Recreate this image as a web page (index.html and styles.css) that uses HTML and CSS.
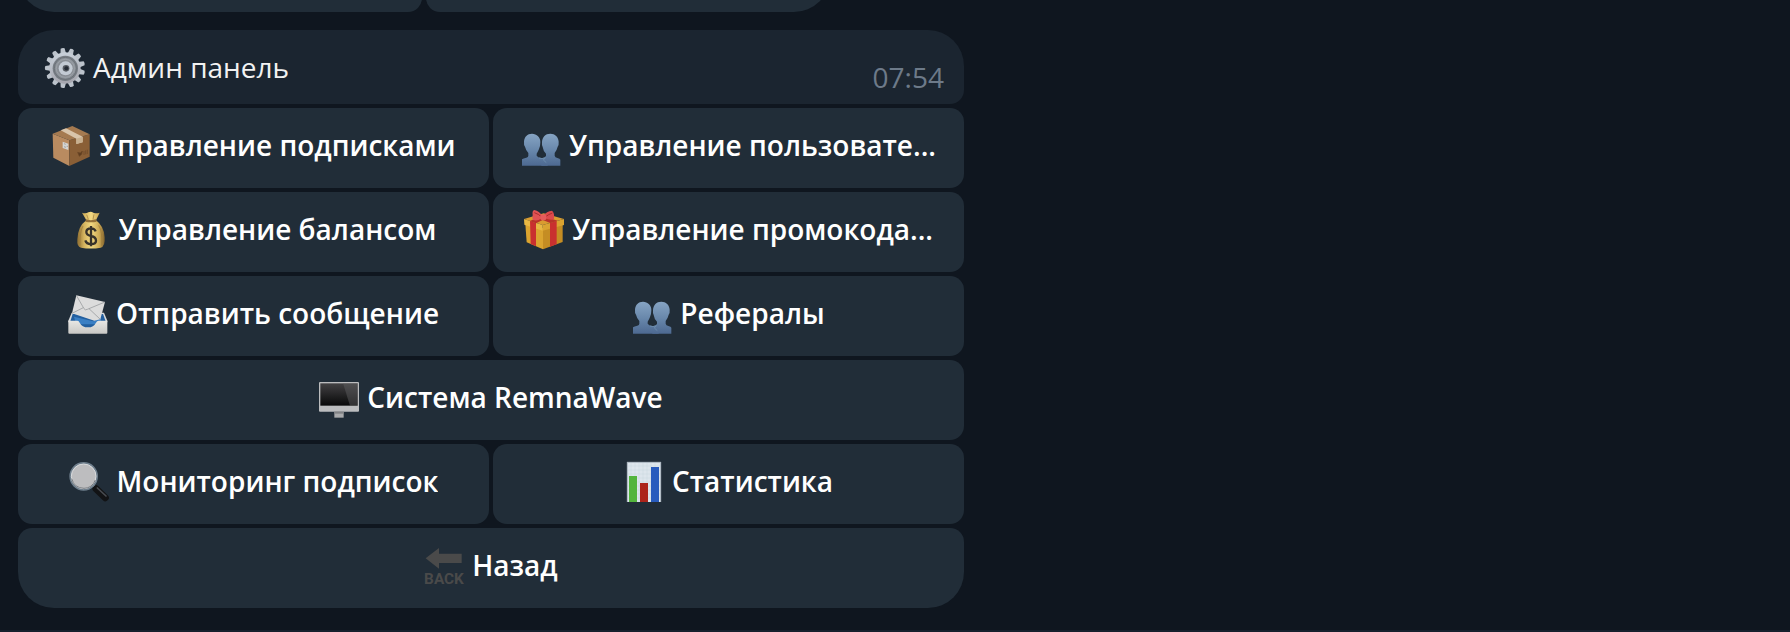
FILE: index.html
```html
<!DOCTYPE html>
<html lang="ru">
<head>
<meta charset="utf-8">
<meta name="viewport" content="width=device-width, initial-scale=1">
<title>Админ панель</title>
<link rel="stylesheet" href="styles.css">
</head>
<body>
<main class="chat">
  <section class="message message-previous" aria-label="Предыдущее сообщение">
    <div class="keyboard">
      <button class="key" type="button" aria-label="Кнопка 1"></button>
      <button class="key" type="button" aria-label="Кнопка 2"></button>
    </div>
  </section>

  <section class="message">
    <header class="bubble">
      <svg class="icon" viewBox="42 38 120 120" aria-hidden="true">
        <defs>
          <linearGradient id="steel" x1="0" y1="0" x2="0" y2="1"><stop offset="0" stop-color="#c9d1da"/><stop offset="1" stop-color="#a5a5ad"/></linearGradient>
        </defs>
        <g fill="url(#steel)" transform="translate(102 98) rotate(-7)">
          <g id="teeth">
            <path id="tooth" d="M-9-40 L-6-59 Q0-62 6-59 L9-40Z" fill="#bcc3cb"/>
            <use href="#tooth" transform="rotate(27.7)"/><use href="#tooth" transform="rotate(55.4)"/><use href="#tooth" transform="rotate(83.1)"/><use href="#tooth" transform="rotate(110.8)"/><use href="#tooth" transform="rotate(138.5)"/><use href="#tooth" transform="rotate(166.2)"/><use href="#tooth" transform="rotate(193.8)"/><use href="#tooth" transform="rotate(221.5)"/><use href="#tooth" transform="rotate(249.2)"/><use href="#tooth" transform="rotate(276.9)"/><use href="#tooth" transform="rotate(304.6)"/><use href="#tooth" transform="rotate(332.3)"/>
          </g>
          <circle r="47"/>
        </g>
        <circle cx="103" cy="99" r="38" fill="#777d84"/>
        <circle cx="103" cy="99" r="33" fill="#8b9198" stroke="#62676d" stroke-width="2"/>
        <circle cx="103" cy="99" r="27" fill="#898e95" stroke="#a6abb1" stroke-width="2"/>
        <circle cx="104" cy="99" r="21" fill="#c3cad3"/>
        <circle cx="105" cy="99" r="10" fill="#555a61"/>
        <circle cx="106" cy="99" r="6" fill="#252b34"/>
      </svg>
      <h1 class="title">Админ панель</h1>
      <time class="time" datetime="07:54">07:54</time>
    </header>

    <div class="keyboard">
      <button class="key" type="button">
        <svg class="icon" viewBox="37 33 120 120" aria-hidden="true">
          <path d="M42 56 92 76V153L44 128Z" fill="#b98b60"/>
          <path d="M92 76 153 58V125L92 153Z" fill="#8a5f36"/>
          <path d="M42 56 101 33 153 58 92 76Z" fill="#a57a50"/>
          <path d="M66 46 82 40 132 65V82L113 87V71Z" fill="#d9c5ab"/>
          <path d="M113 71 132 65V82L113 87Z" fill="#c8b08f"/>
          <path d="M72 80 89 86V105L72 99Z" fill="#d4d5d3"/>
          <path d="M76 86 81 88M84 94H88M76 95 82 97" stroke="#888" stroke-width="2"/>
          <path d="M117 112 125 114 131 108 129 118 122 124ZM136 108V120M141 106V118M146 104V117" fill="#5f3d20" stroke="#6b4726" stroke-width="2"/>
        </svg>
        <span class="label">Управление подписками</span>
      </button>
      <button class="key" type="button">
        <svg class="icon" viewBox="30 33 120 120" aria-hidden="true">
          <defs>
            <linearGradient id="shade" x1="0" y1="55" x2="0" y2="152" gradientUnits="userSpaceOnUse"><stop offset="0" stop-color="#87a5c4"/><stop offset=".55" stop-color="#6786aa"/><stop offset="1" stop-color="#4d6991"/></linearGradient>
          </defs>
          <g id="people" fill="url(#shade)">
            <path d="M63 56C77 56 89 67 88 82Q88 94 84 102Q81 110 77 116V122Q80 127 91 129L110 134V152H33V133Q37 130 46 128Q52 126 52 122V114Q45 107 42 95Q38 91 39 80C40 65 49 56 63 56Z"/>
            <path d="M118 56C132 56 142 65 143 80Q144 91 140 95Q137 107 131 114V122Q132 127 139 129Q147 131 148 134V152H91V130Q102 128 105 123V116Q97 109 95 96Q92 92 93 81C94 66 103 56 118 56Z"/>
            <path d="M84 129Q93 133 103 128Q99 133 97 135L106 143" fill="none" stroke="#7697b5" stroke-width="2"/>
          </g>
        </svg>
        <span class="label">Управление пользовате...</span>
      </button>

      <button class="key" type="button">
        <svg class="icon" viewBox="30 30 120 120" aria-hidden="true">
          <defs>
            <linearGradient id="sack"><stop offset="0" stop-color="#8d6d31"/><stop offset=".25" stop-color="#d5b45f"/><stop offset=".5" stop-color="#f3d982"/><stop offset=".8" stop-color="#cda955"/><stop offset="1" stop-color="#80612b"/></linearGradient>
          </defs>
          <path d="M63 38Q74 42 82 37Q90 33 97 38Q106 42 116 38L105 61Q129 78 131 112Q133 140 119 143Q90 148 60 143Q47 141 49 118Q51 78 76 61Z" fill="url(#sack)"/>
          <path d="M75 58Q89 63 105 58L107 65Q90 69 73 65Z" fill="#947039"/>
          <path d="M77 44 82 58M99 43 96 58M66 78Q56 94 57 137M113 76Q125 94 122 137" fill="none" stroke="#9b7839" stroke-width="2"/>
          <path d="M104 94Q101 85 90 85Q76 85 76 96Q76 105 90 108Q105 111 105 122Q105 132 90 132Q76 132 73 121M90 78V139" fill="none" stroke="#38322a" stroke-width="7"/>
        </svg>
        <span class="label">Управление балансом</span>
      </button>
      <button class="key" type="button">
        <svg class="icon" viewBox="42 30 120 120" aria-hidden="true">
          <path d="M46 72 99 84V148L50 127Z" fill="#dba42f"/>
          <path d="M99 84 158 72V126L99 148Z" fill="#c58d23"/>
          <path d="M42 57 101 40 162 57 98 75Z" fill="#d99c30"/>
          <path d="M42 57 98 75V92L43 74Z" fill="#e8b743"/>
          <path d="M98 75 162 57V75L98 92Z" fill="#daa331"/>
          <path d="M60 63 78 69V139L62 132ZM120 69 140 63V133L120 140Z" fill="#c9302f"/>
          <path d="M59 63 97 48 143 62 121 69 98 60 78 70Z" fill="#b83229"/>
          <path d="M97 47Q88 34 73 30Q66 32 68 45Q66 54 69 60Q82 65 97 53Z" fill="#e05253"/>
          <path d="M101 46Q109 34 126 32Q134 37 132 58Q121 62 104 54Z" fill="#dc494b"/>
          <path d="M73 38Q86 42 95 51M127 39Q115 43 106 51" fill="none" stroke="#a92c30" stroke-width="3"/>
          <rect x="91" y="43" width="18" height="18" rx="6" fill="#e65b5b"/>
        </svg>
        <span class="label">Управление промокода...</span>
      </button>

      <button class="key" type="button">
        <svg class="icon" viewBox="54 33 120 120" aria-hidden="true">
          <defs>
            <linearGradient id="tray" x1="0" y1="0" x2="0" y2="1"><stop offset="0" stop-color="#e8e7e4"/><stop offset="1" stop-color="#c9c8c5"/></linearGradient>
          </defs>
          <path d="M65 89H162L172 113V118H55V113Z" fill="#d9dbdd"/>
          <path d="M68 93H159L167 115Q150 132 112 136Q81 134 61 115Z" fill="#235f9f"/>
          <path d="M72 101 130 115 153 105V124H78Z" fill="#3a7fc4"/>
          <path d="M79 37 165 57 151 109 133 113 66 91Z" fill="#dcdcdc"/>
          <path d="M79 37 102 77Q105 83 112 79L165 57M66 91 100 74M151 109 117 77" fill="none" stroke="#8d8f92" stroke-width="2"/>
          <path d="M55 113H82Q87 113 89 119Q96 133 114 133Q131 133 138 119Q141 113 146 113H172V149Q172 152 169 152H58Q55 152 55 149Z" fill="url(#tray)"/>
        </svg>
        <span class="label">Отправить сообщение</span>
      </button>
      <button class="key" type="button">
        <svg class="icon" viewBox="30 33 120 120" aria-hidden="true"><use href="#people"/></svg>
        <span class="label">Рефералы</span>
      </button>

      <button class="key key-wide" type="button">
        <svg class="icon" viewBox="60 30 120 120" aria-hidden="true">
          <defs>
            <linearGradient id="screen" x1="0" y1="0" x2="0" y2="1"><stop offset="0" stop-color="#424143"/><stop offset="1" stop-color="#080809"/></linearGradient>
          </defs>
          <rect x="60" y="42" width="120" height="89" rx="3" fill="#bbbcbe"/>
          <rect x="64" y="46" width="112" height="67" fill="url(#screen)"/>
          <path d="M132 46H176V113H153Z" fill="#626164" opacity=".45"/>
          <path d="M106 131H134V149H106Z" fill="#a9aaac"/>
          <path d="M106 131H134V137H106Z" fill="#808184"/>
        </svg>
        <span class="label">Система RemnaWave</span>
      </button>

      <button class="key" type="button">
        <svg class="icon" viewBox="53 36 120 120" aria-hidden="true">
          <path d="M124 104 136 115" stroke="#a0a5aa" stroke-width="8"/>
          <path d="M134 116 162 143" stroke="#121315" stroke-width="21" stroke-linecap="round"/>
          <path d="M138 114 164 138" stroke="#484b50" stroke-width="5" stroke-linecap="round"/>
          <circle cx="97" cy="79" r="40" fill="#bdbdc0" stroke="#6f7f8d" stroke-width="6"/>
          <circle cx="97" cy="79" r="37" fill="#bdbdbf" stroke="#d9dbdd" stroke-width="3"/>
          <path d="M61 86Q68 114 98 115Q123 114 132 90" fill="none" stroke="#777b80" stroke-width="3"/>
        </svg>
        <span class="label">Мониторинг подписок</span>
      </button>
      <button class="key" type="button">
        <svg class="icon" viewBox="42 36 120 120" aria-hidden="true">
          <rect x="51" y="36" width="102" height="120" fill="#dde5ec"/>
          <path d="M51 48H153M51 60H153M51 72H153M51 84H153M51 96H153M51 108H153M51 120H153M51 132H153M51 144H153M63 36V156M75 36V156M87 36V156M99 36V156M111 36V156M123 36V156M135 36V156" stroke="#c5d3df" stroke-width="1"/>
          <path d="M51 37H153M52 36V156M152 36V156" stroke="#a9b4bd" stroke-width="3"/>
          <rect x="57" y="78" width="24" height="78" fill="#52b43c"/>
          <rect x="90" y="99" width="24" height="57" fill="#ac241b"/>
          <rect x="123" y="51" width="24" height="105" fill="#285bbd"/>
        </svg>
        <span class="label">Статистика</span>
      </button>

      <button class="key key-wide" type="button">
        <svg class="icon" viewBox="43 33 120 120" aria-hidden="true">
          <path d="M48 70 88 39V56H156V84H88V101Z" fill="#4a4a4a"/>
          <text class="icon-text" x="103" y="147" text-anchor="middle">BACK</text>
        </svg>
        <span class="label">Назад</span>
      </button>
    </div>
  </section>
</main>
<footer class="composer"></footer>
</body>
</html>
```

FILE: styles.css
```css
* {
  box-sizing: border-box;
}

body {
  display: flex;
  flex-direction: column;
  height: 100vh;
  margin: 0;
  overflow: hidden;
  background: #0f161f;
  color: #fff;
  font: 400 28px/38px "Open Sans", "Noto Sans", sans-serif;
}

.chat {
  display: flex;
  flex: 1;
  flex-direction: column;
  justify-content: flex-end;
  gap: 18px;
  min-height: 0;
  padding: 0 18px 22px;
}

.message {
  display: flex;
  flex-direction: column;
  gap: 4px;
  width: 100%;
  max-width: 946px;
}

.message-previous {
  max-width: 812px;
}

.bubble {
  display: flex;
  align-items: center;
  gap: 8px;
  padding: 18px 20px 16px 27px;
  border-radius: 36px 36px 14px 14px;
  background: #1b2530;
}

.title {
  flex: 1;
  margin: 0;
  padding-bottom: 2px;
  color: #f2f2f2;
  font: inherit;
}

.time {
  align-self: flex-end;
  margin-bottom: -8px;
  color: #6d7a89;
}

.keyboard {
  display: grid;
  grid-template-columns: repeat(2, minmax(0, 1fr));
  gap: 4px;
}

.key {
  display: flex;
  align-items: center;
  justify-content: center;
  gap: 8px;
  min-height: 80px;
  padding: 16px 20px 20px;
  border: 0;
  border-radius: 14px;
  background: #212d38;
  color: inherit;
  font: inherit;
  font-weight: 600;
  cursor: pointer;
}

.key-wide {
  grid-column: 1 / -1;
}

.key-wide:last-child {
  border-radius: 14px 14px 36px 36px;
}

.message-previous .key:first-child {
  border-bottom-left-radius: 36px;
}

.message-previous .key:last-child {
  border-bottom-right-radius: 36px;
}

.icon {
  flex: none;
  width: 40px;
  height: 40px;
  overflow: visible;
}

.icon-text {
  fill: #4a4a4a;
  font: 700 46px Roboto, "Liberation Sans", sans-serif;
}

.label {
  padding-bottom: 2px;
  overflow: hidden;
  text-overflow: ellipsis;
  white-space: nowrap;
}

.composer {
  height: 2px;
  background: #17202d;
}
```
